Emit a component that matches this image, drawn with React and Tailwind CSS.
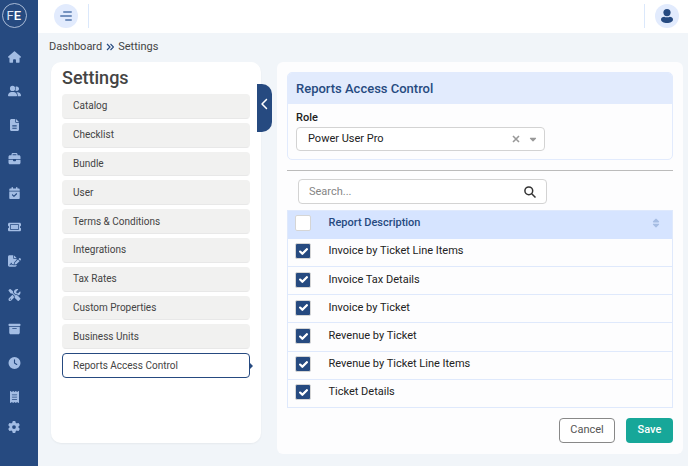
import React, { useState } from 'react'
import clsx from 'clsx'
import {
  FaHouse,
  FaUserGroup,
  FaFileLines,
  FaBriefcase,
  FaCalendarCheck,
  FaTicket,
  FaFileSignature,
  FaScrewdriverWrench,
  FaBoxArchive,
  FaClock,
  FaReceipt,
  FaGear,
  FaCheck,
  FaChevronLeft,
  FaCaretDown,
  FaSort,
} from 'react-icons/fa6'

const navItems = [
  { label: 'Home', icon: FaHouse },
  { label: 'Customers', icon: FaUserGroup },
  { label: 'Quotes', icon: FaFileLines },
  { label: 'Jobs', icon: FaBriefcase },
  { label: 'Schedule', icon: FaCalendarCheck },
  { label: 'Tickets', icon: FaTicket },
  { label: 'Contracts', icon: FaFileSignature },
  { label: 'Tools', icon: FaScrewdriverWrench },
  { label: 'Inventory', icon: FaBoxArchive },
  { label: 'Timesheets', icon: FaClock },
  { label: 'Invoices', icon: FaReceipt },
]

const settings = [
  'Catalog',
  'Checklist',
  'Bundle',
  'User',
  'Terms & Conditions',
  'Integrations',
  'Tax Rates',
  'Custom Properties',
  'Business Units',
  'Reports Access Control',
]

const reports = [
  'Invoice by Ticket Line Items',
  'Invoice Tax Details',
  'Invoice by Ticket',
  'Revenue by Ticket',
  'Revenue by Ticket Line Items',
  'Ticket Details',
]

const Checkbox = ({ label, checked, onChange }) => (
  <label className="grid w-4 h-4 place-items-center">
    <input
      type="checkbox"
      aria-label={label}
      checked={checked}
      onChange={onChange}
      className="col-start-1 row-start-1 w-4 h-4 appearance-none rounded-xs border border-[#d5d5d5] bg-white checked:bg-[#264a80]"
    />
    {checked && (
      <FaCheck
        className="col-start-1 row-start-1 w-[9px] h-[9px] text-white pointer-events-none"
        stroke="currentColor"
        strokeWidth="60"
      />
    )}
  </label>
)

const Sidebar = () => (
  <nav className="flex w-[38px] shrink-0 flex-col bg-[#264a80] pl-[2px] pt-[3px] text-[#a3bde4]">
    <a href="#logo" aria-label="FE" className="mb-[22px] block w-[25px] h-[25px]">
      <svg viewBox="0 0 25 25" className="w-[25px] h-[25px]">
        <circle cx="12.5" cy="12.5" r="12" fill="none" stroke="#c9d6ea" strokeWidth="0.8" />
        <text x="4.5" y="16.5" fontFamily="Roboto, sans-serif" fontSize="13" fill="#dbe5f4">
          F
          <tspan fontWeight="500" fill="#fff">E</tspan>
        </text>
      </svg>
    </a>
    <div className="flex flex-col gap-5 pl-[5px]">
      {navItems.map(({ label, icon: Icon }) => (
        <a key={label} href="#nav" aria-label={label} className="flex w-3.5 h-3.5 items-center justify-center">
          <Icon className="w-[13px] h-3 shrink-0" />
        </a>
      ))}
    </div>
    <a href="#settings" aria-label="Settings" className="mt-[17px] ml-1.5 w-3 h-3">
      <FaGear className="w-3 h-3" />
    </a>
  </nav>
)

const Header = () => (
  <header className="flex h-[33px] items-center bg-white pl-4 pr-[9px] pb-px">
    <button aria-label="Toggle menu" className="flex w-6 h-6 items-center justify-center rounded-full bg-[#e2ebfd]">
      <svg viewBox="0 0 12 10" className="w-3 h-2.5" stroke="#7592bf" strokeWidth="2" strokeLinecap="round">
        <path d="M4 1h7M1 5h10M6 9h5" />
      </svg>
    </button>
    <div className="ml-2.5 h-6 w-px bg-[#dbe8fb]" />
    <div className="ml-auto h-6 w-px bg-[#dbe8fb]" />
    <button aria-label="Account" className="ml-2.5 flex w-6 h-6 items-center justify-center rounded-full bg-[#e2ebfd]">
      <svg viewBox="0 0 12 14" className="w-3 h-3.5" fill="#264a80">
        <circle cx="6" cy="3.6" r="3.6" />
        <path d="M0 10.5C0 8.6 1.6 7.7 3.2 7.7c1 .8 4.6.8 5.6 0C10.4 7.7 12 8.6 12 10.5 12 12.7 9.3 14 6 14S0 12.7 0 10.5z" />
      </svg>
    </button>
  </header>
)

const SettingsMenu = () => {
  const [active, setActive] = useState('Reports Access Control')

  return (
    <section className="relative h-[381px] w-[210px] shrink-0 rounded-[10px] bg-white px-[11px] pt-1.5 shadow-xs">
      <h1 className="text-lg leading-5 font-medium text-[#444]">Settings</h1>
      <ul className="mt-1.5 grid h-[284px] gap-1">
        {settings.map((item) => (
          <li key={item} className="relative flex">
            <button
              onClick={() => setActive(item)}
              className={clsx(
                'w-full rounded-[4px] border px-2.5 text-left text-[10px] leading-3 text-[#444]',
                item === active ? 'border-[#264a80] bg-white' : 'border-[#f1f1f0] border-b-[#e8e8e8] bg-[#f1f1f0]'
              )}
            >
              {item}
            </button>
            {item === active && (
              <span className="absolute left-full top-1/2 -translate-y-1/2 border-y-3 border-l-3 border-y-transparent border-l-[#264a80]" />
            )}
          </li>
        ))}
      </ul>
      {/* collapse handle */}
      <button
        aria-label="Collapse settings"
        className="absolute -right-[11px] top-[22px] flex h-12 w-[15px] items-center justify-center rounded-r-[10px] bg-[#264a80] pb-2 text-white"
      >
        <FaChevronLeft className="w-2.5 h-3" />
      </button>
    </section>
  )
}

const ReportsAccess = () => {
  const [selected, setSelected] = useState(reports)
  const [allChecked, setAllChecked] = useState(false)

  const toggle = (name) =>
    setSelected(selected.includes(name) ? selected.filter((r) => r !== name) : [...selected, name])

  const toggleAll = () => {
    setSelected(allChecked ? [] : reports)
    setAllChecked(!allChecked)
  }

  return (
    <section className="flex-1 rounded-md bg-[#fdfdfe] px-2.5 pt-2.5 pb-[11px]">
      <div className="h-[88px] overflow-hidden rounded-[5px] border border-[#e2ebfd]">
        <h2 className="bg-[#e2ebfd] px-2 text-[13px] leading-[31px] font-medium text-[#264a80]">Reports Access Control</h2>
        <div className="px-2 pt-2">
          <label htmlFor="role" className="block text-[11px] leading-3 font-medium text-[#222]">
            Role
          </label>
          <div className="relative mt-[3px] w-[249px]">
            <select
              id="role"
              className="block h-6 w-full appearance-none rounded-[4px] border border-[#d3d3d3] bg-white px-[11px] text-[11px] text-[#222]"
            >
              <option>Power User Pro</option>
            </select>
            <div className="absolute inset-y-0 right-[7px] flex items-center gap-2 text-[#999] pointer-events-none">
              <svg viewBox="0 0 8 8" className="w-2 h-2" stroke="currentColor" strokeWidth="1.6">
                <path d="M1 1l6 6M7 1L1 7" />
              </svg>
              <FaCaretDown className="w-2.5 h-2.5" />
            </div>
          </div>
        </div>
      </div>

      <hr className="mt-2.5 border-[#bbb]" />

      <div className="mt-2 ml-[11px] flex h-[25px] w-[249px] items-center rounded-[4px] border border-[#d3d3d3] bg-white px-2.5">
        <input
          type="search"
          aria-label="Search"
          placeholder="Search..."
          className="min-w-0 flex-1 text-[11px] leading-4 outline-none placeholder:text-[#858585]"
        />
        <svg viewBox="0 0 12 12" className="w-3 h-3" fill="none" stroke="#333" strokeWidth="1.5">
          <circle cx="4.8" cy="4.8" r="3.9" />
          <path d="M7.7 7.7l3.8 3.8" />
        </svg>
      </div>

      <table className="mt-1.5 h-[198px] w-full border-collapse border border-[#dfe9fc] text-left text-[11px] leading-4">
        <thead>
          <tr className="h-7 bg-[#d6e4ff] text-[#264a80]">
            <th className="w-[41px] pl-[7px] pb-[3px]">
              <Checkbox label="Select all" checked={allChecked} onChange={toggleAll} />
            </th>
            <th className="pb-[3px] font-medium">Report Description</th>
            <th className="w-[21px] pb-[3px]">
              <button aria-label="Sort" className="block text-[#a6bde3]">
                <FaSort className="w-2 h-2.5" />
              </button>
            </th>
          </tr>
        </thead>
        <tbody>
          {reports.map((name) => (
            <tr key={name} className="h-7 border-b border-[#dfe9fc] text-[#222]">
              <td className="pl-[7px] pb-0.5">
                <Checkbox label={name} checked={selected.includes(name)} onChange={() => toggle(name)} />
              </td>
              <td colSpan={2} className="pb-0.5">{name}</td>
            </tr>
          ))}
        </tbody>
      </table>

      <div className="mt-2.5 flex justify-end gap-[11px] text-[11px]">
        <button className="h-[25px] w-14 rounded-[4px] border border-[#888] bg-white text-[#555]">Cancel</button>
        <button className="h-[25px] w-[47px] rounded-[4px] bg-[#17a799] font-medium text-white">Save</button>
      </div>
    </section>
  )
}

const App = () => {
  return (
    <div className="flex min-h-screen bg-[#f1f5f9] font-[Roboto,sans-serif]">
      <Sidebar />
      <div className="flex min-w-0 flex-1 flex-col">
        <Header />
        <nav aria-label="Breadcrumb" className="mt-[7px] flex items-center gap-1 pl-[11px] text-[11px] leading-[14px] text-[#444]">
          <a href="#dashboard">Dashboard</a>
          <svg viewBox="0 0 8 8" className="w-2 h-2" fill="none" stroke="#264a80" strokeWidth="1.2">
            <path d="M1 1l3 3-3 3M4.5 1l3 3-3 3" />
          </svg>
          <a href="#settings">Settings</a>
        </nav>
        <main className="mt-2 flex items-start gap-4 pl-[13px] pr-[5px] pb-3">
          <SettingsMenu />
          <ReportsAccess />
        </main>
      </div>
    </div>
  )
}

export default App
